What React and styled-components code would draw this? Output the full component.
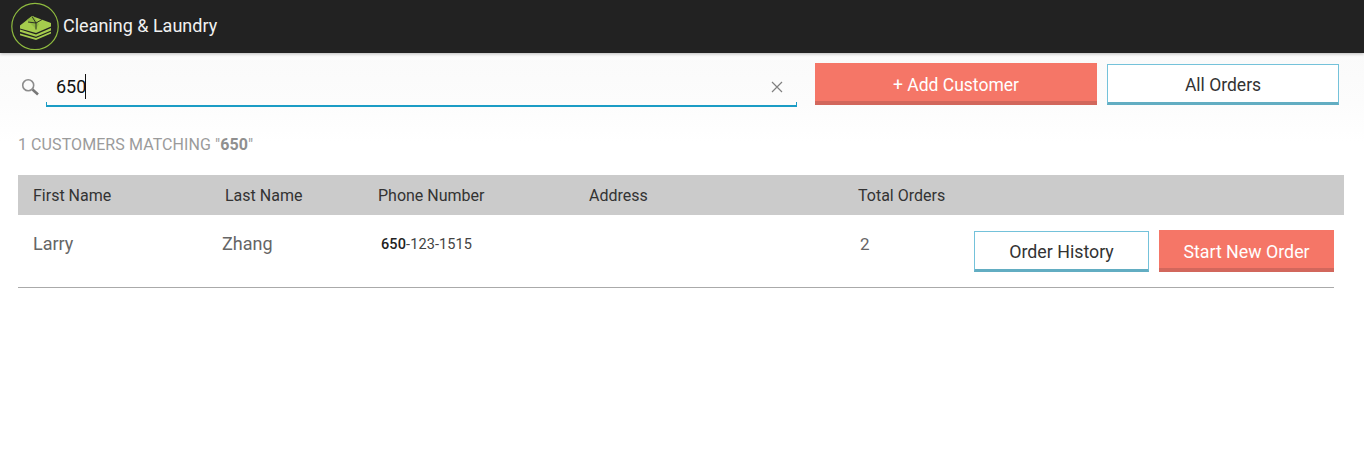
import React from "react";
import styled, { createGlobalStyle } from "styled-components";

const Global = createGlobalStyle`
  html, body { margin: 0; padding: 0; background: #fff; }
  body { font-family: Roboto, "Liberation Sans", sans-serif; overflow: hidden; }
  * { box-sizing: border-box; }
`;
const Page = styled.div`
  width: 1364px;
  height: 457px;
  display: flex;
  flex-direction: column;
  background: #fff;
`;
const TopBar = styled.header`
  height: 53px;
  flex: none;
  background: #222222;
  display: flex;
  align-items: center;
  padding: 0 0 2px 11px;
  gap: 4px;
  box-shadow: 0 1px 3px rgba(0, 0, 0, 0.25);
  position: relative;
`;
const Logo = styled.svg`
  width: 48px;
  height: 48px;
  flex: none;
`;
const Title = styled.div`
  color: #f1f1f1;
  font-size: 18px;
  line-height: 24px;
  margin-top: 1px;
`;
const Main = styled.div`
  flex: 1;
  display: flex;
  flex-direction: column;
  background: linear-gradient(#fafafa 0, #fcfcfc 50px, #ffffff 90px);
`;
const Tools = styled.div`
  height: 75px;
  flex: none;
  display: flex;
  align-items: flex-start;
  padding: 10px 25px 0 20px;
`;
const SearchIcon = styled.svg`
  width: 20px;
  height: 20px;
  flex: none;
  margin: 14px 6px 0 0;
`;
const SearchField = styled.div`
  width: 751px;
  height: 44px;
  flex: none;
  position: relative;
  display: flex;
  align-items: center;
  padding: 5px 10px 0;
  border-bottom: 2px solid #1b9cc5;
  &::before,
  &::after {
    content: "";
    position: absolute;
    bottom: 0;
    width: 1px;
    height: 3px;
    background: #1b9cc5;
  }
  &::before { left: 0; }
  &::after { right: 0; }
`;
const Cursor = styled.span`
  width: 1px;
  height: 25px;
  margin-left: -1px;
  background: #111;
  display: inline-block;
`;
const SearchValue = styled.span`
  font-size: 18px;
  color: #111;
  line-height: 25px;
`;
const Clear = styled.svg`
  width: 12px;
  height: 12px;
  position: absolute;
  right: 14px;
  top: 18px;
`;
const Btn = styled.button`
  width: ${(p) => p.$w}px;
  height: ${(p) => p.$h}px;
  flex: none;
  padding: 0;
  font: 400 ${(p) => p.$fs || 17.5}px Roboto, "Liberation Sans", sans-serif;
  cursor: pointer;
  border-radius: 0;
  ${(p) =>
    p.$primary
      ? `background:#f57667;color:#fff;border:0;border-bottom:4px solid #d2675c;padding-top:${p.$pt ?? 5}px;`
      : `background:#fff;color:#333;border:1px solid #74c2da;border-bottom:3px solid #62adc2;padding-top:${p.$pt ?? 2}px;`}
`;
const AddBtn = styled(Btn)`
  margin-left: 18px;
`;
const AllBtn = styled(Btn)`
  margin-left: 10px;
  margin-top: 1px;
`;
const Count = styled.div`
  height: 47px;
  flex: none;
  padding: 8px 0 0 18px;
  font-size: 16px;
  line-height: 18px;
  letter-spacing: 0.08px;
  color: #9b9b9b;
  b { font-weight: 700; color: #8f8f8f; }
`;
const columns = "192px 153px 211px 269px 1fr";
const Head = styled.div`
  margin: 0 20px 0 18px;
  height: 40px;
  flex: none;
  background: #cbcbcb;
  display: grid;
  grid-template-columns: ${columns};
  align-items: center;
  padding-left: 15px;
  font-size: 16px;
  color: #333;
`;
const Row = styled.div`
  margin: 0 30px 0 18px;
  height: 73px;
  flex: none;
  border-bottom: 1px solid #aaaaaa;
  display: flex;
  align-items: flex-start;
  position: relative;
  color: #666;
`;
const Cell = styled.div`
  width: ${(p) => p.$w}px;
  padding-left: ${(p) => p.$pl}px;
  padding-top: ${(p) => p.$pt ?? 18}px;
  flex: none;
  font-size: ${(p) => p.$fs || 18}px;
  line-height: 21px;
`;
const Phone = styled(Cell)`
  color: #444;
  letter-spacing: 0.1px;
  b { font-weight: 500; color: #222; }
`;
const Actions = styled.div`
  display: flex;
  gap: 10px;
  margin-left: auto;
  padding-top: 15px;
  align-items: flex-end;
`;

export default function App() {
  return (
    <Page>
      <Global />
      <TopBar>
        <Logo viewBox="0 0 48 48" fill="none">
          <circle cx="24" cy="24.5" r="23.2" stroke="#8fbb3f" strokeWidth="1.2" />
          <path d="M9 31.5 L9 33.2 L25 38 L40 31.5 L40 29.8 L25 36 Z" fill="#a5cc4d" />
          <path d="M9 27.6 L9 29.8 L25 34.8 L40 28.4 L40 26 L25 32.4 Z" fill="#a5cc4d" />
          <path d="M9 23.5 L21 14 L40 21 L40 24.6 L25 31 L9 26.4 Z" fill="#a5cc4d" />
          <path d="M16 18 L21 14 L23 14.8 L28 22 L25 27 Z" fill="#8fb840" />
          <path d="M21 14.5 L25 21 L25 27.5 M25 21 L31 17.5 M17 20 L25 21" stroke="#222" strokeWidth="0.9" />
        </Logo>
        <Title>Cleaning &amp; Laundry</Title>
      </TopBar>
      <Main>
        <Tools>
          <SearchIcon viewBox="0 0 20 20" fill="none">
            <circle cx="8.2" cy="8.2" r="5.5" stroke="#8c8c8c" strokeWidth="1.6" />
            <path d="M12.5 12.5 L18 17.5" stroke="#777" strokeWidth="2.6" />
          </SearchIcon>
          <SearchField>
            <SearchValue>650</SearchValue>
            <Cursor />
            <Clear viewBox="0 0 12 12">
              <path d="M1 1 L11 11 M11 1 L1 11" stroke="#808080" strokeWidth="1.2" />
            </Clear>
          </SearchField>
          <AddBtn $primary $w={282} $h={42}>+ Add Customer</AddBtn>
          <AllBtn $w={232} $h={41} $pt={3}>All Orders</AllBtn>
        </Tools>
        <Count>
          1 CUSTOMERS MATCHING "<b>650</b>"
        </Count>
        <Head>
          <span>First Name</span>
          <span>Last Name</span>
          <span>Phone Number</span>
          <span>Address</span>
          <span>Total Orders</span>
        </Head>
        <Row>
          <Cell $w={204} $pl={15}>Larry</Cell>
          <Cell $w={159}>Zhang</Cell>
          <Phone $w={200} $fs={14.5} $pl={0} $pt={19}><b>650</b>-123-1515</Phone>
          <Cell $w={279} $fs={17} $pl={0} />
          <Cell $w={60} $pl={0} $fs={17} $pt={19}>2</Cell>
          <Actions>
            <Btn $w={175} $h={41} $fs={17.8} $pt={1}>Order History</Btn>
            <Btn $primary $w={175} $h={42} $fs={17.8} $pt={4}>Start New Order</Btn>
          </Actions>
        </Row>
      </Main>
    </Page>
  );
}
